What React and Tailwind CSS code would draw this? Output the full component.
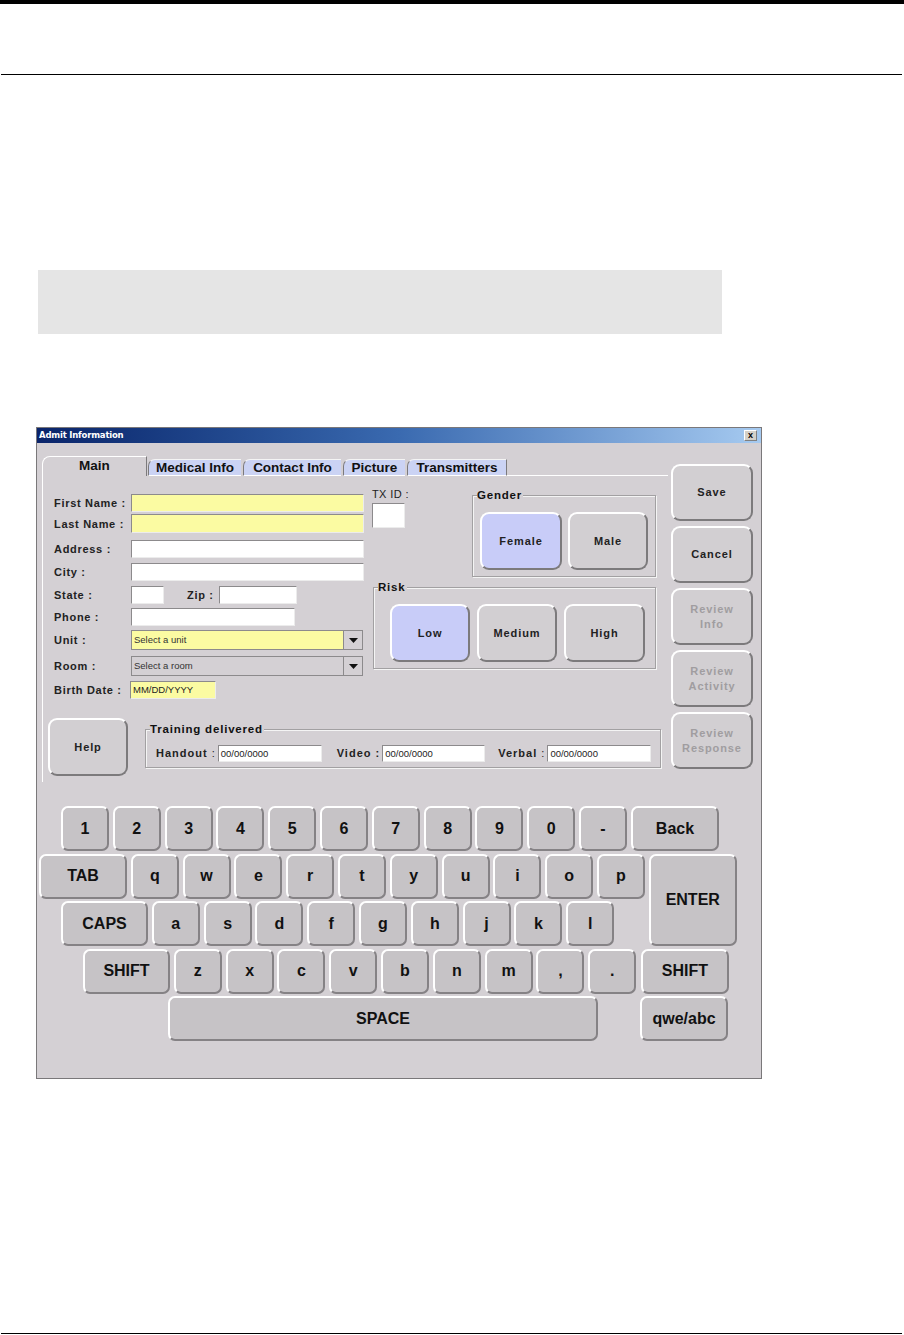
import React from 'react';

const keyBase =
  'flex items-center justify-center h-[45px] rounded-[7px] bg-[#c6c3c6] border-2 border-t-white border-l-white border-r-[#858285] border-b-[#858285] text-[16px] font-bold text-[#111] shrink-0';

const Key = ({ label, className = 'w-[48px]' }) => (
  <div className={`${keyBase} ${className}`}>{label}</div>
);

// big rounded touch button used in the dialog
const PadButton = ({ children, active, disabled, className = '' }) => (
  <div
    className={`flex items-center justify-center text-center shrink-0 rounded-[9px] border-2 border-t-white border-l-white border-r-[#7c7a7c] border-b-[#7c7a7c] text-[11px] font-bold tracking-[0.9px] leading-[15px] ${
      active ? 'bg-[#c8ccf8]' : 'bg-[#d2cfd2]'
    } ${disabled ? 'text-[#a09da0]' : 'text-[#222]'} ${className}`}
  >
    {children}
  </div>
);

const Group = ({ title, className = '', children }) => (
  <div className={`relative border border-[#a2a0a2] shadow-[inset_1px_1px_0_#f4f4f4,1px_1px_0_#f4f4f4] ${className}`}>
    <span className="absolute -top-[7px] left-[4px] bg-[#d4d0d4] pr-[1px] text-[11.5px] font-bold tracking-[0.8px] leading-[13px] text-[#111] whitespace-nowrap">
      {title}
    </span>
    {children}
  </div>
);

const Field = ({ className = '', value, yellow, h = 'h-[18px]' }) => (
  <div
    className={`${h} shrink-0 border border-[#8c8a8c] border-b-[#ececec] border-r-[#ececec] ${
      yellow ? 'bg-[#fbfba2]' : 'bg-white'
    } text-[9.5px] leading-[16px] pl-[2px] text-[#222] tracking-normal font-normal ${className}`}
  >
    {value}
  </div>
);

const Select = ({ value, yellow }) => (
  <div
    className={`flex h-[20px] w-[232px] border border-[#8c8a8c] ${yellow ? 'bg-[#fbfba2]' : 'bg-[#d4d0d4]'}`}
  >
    <div className="flex-1 pl-[2px] text-[9.5px] leading-[18px] text-[#333]">{value}</div>
    <div className="flex w-[19px] items-center justify-center border-l border-[#8c8a8c] bg-[#d4d0d4]">
      <svg width="9" height="5" viewBox="0 0 9 5">
        <path d="M0 0h9L4.5 5z" fill="#111" />
      </svg>
    </div>
  </div>
);

const Row = ({ label, mt, children }) => (
  <div className={`flex items-center ${mt}`}>
    <div className="w-[77px] shrink-0 whitespace-nowrap text-[11px] font-bold tracking-[0.7px] text-[#222] leading-[12px]">{label}</div>
    {children}
  </div>
);

const Tab = ({ label, className }) => (
  <div
    className={`flex h-[17px] items-center justify-center rounded-tl-[7px] border-l border-t border-l-[#7c7a7c] border-t-[#f4f4f4] border-b border-b-white bg-[#cbd3f4] text-[13.5px] font-bold leading-[15px] text-[#111] ${className}`}
  >
    {label}
  </div>
);

const letters1 = ['1', '2', '3', '4', '5', '6', '7', '8', '9', '0', '-'];
const letters2 = ['q', 'w', 'e', 'r', 't', 'y', 'u', 'i', 'o', 'p'];
const letters3 = ['a', 's', 'd', 'f', 'g', 'h', 'j', 'k', 'l'];
const letters4 = ['z', 'x', 'c', 'v', 'b', 'n', 'm', ',', '.'];

export default function App() {
  return (
    <div className="w-[904px] h-[1335px] bg-white font-['Liberation_Sans',Arial,sans-serif] overflow-hidden">
      <div className="h-[4px] bg-black" />
      <div className="h-[70px]" />
      <div className="ml-[1px] mr-[2px] h-[1px] bg-black" />
      <div className="h-[195px]" />
      <div className="ml-[38px] h-[64px] w-[684px] bg-[#e5e5e5]" />
      <div className="h-[93px]" />

      {/* Admit Information dialog */}
      <div className="ml-[36px] flex h-[652px] w-[726px] flex-col border border-[#7a787a] bg-[#d4d0d4]">
        <div className="flex h-[15px] items-center justify-between bg-gradient-to-r from-[#0a246a] via-[#3a6ab0] to-[#a6caf0] pl-[2px] pr-[4px]">
          <span className="font-['DejaVu_Sans',sans-serif] text-[8.5px] font-bold tracking-[-0.2px] text-white">Admit Information</span>
          <div className="flex h-[11px] w-[13px] items-center justify-center border border-[#808080] border-t-white border-l-white bg-[#d4d0c8] text-[9px] font-bold leading-none text-black">
            x
          </div>
        </div>

        <div className="flex flex-1 flex-col pt-[13px]">
          {/* upper area */}
          <div className="flex h-[350px] pl-[5px]">
            <div className="flex w-[626px] flex-col">
              {/* tabs */}
              <div className="flex h-[20px] items-end">
                <div className="flex h-[20px] w-[105px] items-center justify-center rounded-tl-[8px] border-l border-t border-r border-l-white border-t-white border-r-[#7c7a7c] bg-[#d4d0d4] text-[13.5px] font-bold text-[#111]">
                  Main
                </div>
                <Tab label="Medical Info" className="ml-[1px] w-[93px]" />
                <Tab label="Contact Info" className="ml-[2px] w-[98px]" />
                <Tab label="Picture" className="ml-[2px] w-[62px]" />
                <Tab label="Transmitters" className="ml-[2px] w-[100px] border-r border-r-[#7c7a7c]" />
                <div className="flex-1 border-b border-white" />
              </div>

              {/* panel */}
              <div className="flex flex-col border-l border-white pt-[12px] pb-[6px]">
                <div className="flex">
                  {/* column A */}
                  <div className="ml-[11px] mt-[6px] flex w-[310px] flex-col">
                    <Row label="First Name :" mt="">
                      <Field yellow className="w-[233px]" />
                    </Row>
                    <Row label="Last Name :" mt="mt-[2px]">
                      <Field yellow h="h-[19px]" className="w-[233px]" />
                    </Row>
                    <Row label="Address :" mt="mt-[7px]">
                      <Field className="w-[233px]" />
                    </Row>
                    <Row label="City :" mt="mt-[5px]">
                      <Field className="w-[233px]" />
                    </Row>
                    <Row label="State :" mt="mt-[5px]">
                      <Field className="w-[33px]" />
                      <div className="ml-[23px] w-[32px] text-[11px] font-bold tracking-[0.7px] text-[#222]">Zip :</div>
                      <Field className="w-[78px]" />
                    </Row>
                    <Row label="Phone :" mt="mt-[4px]">
                      <Field className="w-[164px]" />
                    </Row>
                    <Row label="Unit :" mt="mt-[4px]">
                      <Select yellow value="Select a unit" />
                    </Row>
                    <Row label="Room :" mt="mt-[6px]">
                      <Select value="Select a room" />
                    </Row>
                    <Row label="Birth Date :" mt="mt-[5px]">
                      <Field yellow value="MM/DD/YYYY" className="-ml-[1px] w-[86px]" />
                    </Row>
                  </div>

                  {/* column B */}
                  <div className="ml-[8px] flex w-[285px] flex-col">
                    <div className="flex">
                      <div className="flex w-[34px] flex-col">
                        <div className="h-[12px] whitespace-nowrap text-[11px] leading-[12px] text-[#222] tracking-[0.4px]">TX ID :</div>
                        <Field h="h-[25px]" className="mt-[3px] w-[33px]" />
                      </div>
                      <Group title="Gender" className="ml-[66px] mt-[7px] h-[82px] w-[184px]">
                        <div className="flex pl-[7px] pt-[16px]">
                          <PadButton active className="h-[58px] w-[82px]">Female</PadButton>
                          <PadButton className="ml-[6px] h-[58px] w-[80px]">Male</PadButton>
                        </div>
                      </Group>
                    </div>
                    <Group title="Risk" className="ml-[1px] mt-[10px] h-[82px] w-[283px]">
                      <div className="flex pl-[16px] pt-[16px]">
                        <PadButton active className="h-[58px] w-[80px]">Low</PadButton>
                        <PadButton className="ml-[7px] h-[58px] w-[80px]">Medium</PadButton>
                        <PadButton className="ml-[7px] h-[58px] w-[81px]">High</PadButton>
                      </div>
                    </Group>
                  </div>
                </div>

                {/* help + training */}
                <div className="mt-[19px] flex">
                  <PadButton className="ml-[5px] h-[58px] w-[80px]">Help</PadButton>
                  <Group title="Training delivered" className="ml-[17px] mt-[11px] h-[39px] w-[516px]">
                    <div className="flex items-center pl-[10px] pt-[15px] text-[11px] tracking-[1px] text-[#222]">
                      <span className="font-bold">Handout</span>
                      <span>&nbsp;:</span>
                      <Field value="00/00/0000" h="h-[17px]" className="ml-[2px] w-[104px] leading-[15px]" />
                      <span className="ml-[15px] font-bold">Video :</span>
                      <Field value="00/00/0000" h="h-[17px]" className="ml-[2px] w-[103px] leading-[15px]" />
                      <span className="ml-[13px] font-bold">Verbal</span>
                      <span>&nbsp;:</span>
                      <Field value="00/00/0000" h="h-[17px]" className="ml-[2px] w-[104px] leading-[15px]" />
                    </div>
                  </Group>
                </div>
              </div>
            </div>

            {/* right command column */}
            <div className="ml-[3px] mt-[8px] flex flex-col gap-[5px]">
              <PadButton className="h-[57px] w-[82px]">Save</PadButton>
              <PadButton className="h-[57px] w-[82px]">Cancel</PadButton>
              <PadButton disabled className="h-[57px] w-[82px]">Review<br />Info</PadButton>
              <PadButton disabled className="h-[57px] w-[82px]">Review<br />Activity</PadButton>
              <PadButton disabled className="h-[57px] w-[82px]">Review<br />Response</PadButton>
            </div>
          </div>

          {/* on-screen keyboard */}
          <div className="flex flex-col gap-[2.5px]">
            <div className="ml-[24px] flex gap-[3.8px]">
              {letters1.map((k) => (
                <Key key={k} label={k} />
              ))}
              <Key label="Back" className="ml-[0.2px] w-[88px]" />
            </div>
            <div className="ml-[2px] flex">
              <div className="flex flex-col gap-[2.5px]">
                <div className="flex gap-[3.8px]">
                  <Key label="TAB" className="w-[88px]" />
                  {letters2.map((k) => (
                    <Key key={k} label={k} />
                  ))}
                </div>
                <div className="ml-[22px] flex gap-[3.8px]">
                  <Key label="CAPS" className="w-[87px]" />
                  {letters3.map((k) => (
                    <Key key={k} label={k} />
                  ))}
                </div>
              </div>
              <Key label="ENTER" className="ml-[3.8px] h-[92.5px] w-[88px]" />
            </div>
            <div className="ml-[46px] flex gap-[3.8px]">
              <Key label="SHIFT" className="w-[87px]" />
              {letters4.map((k) => (
                <Key key={k} label={k} />
              ))}
              <Key label="SHIFT" className="ml-[1px] w-[88px]" />
            </div>
            <div className="ml-[131px] flex">
              <Key label="SPACE" className="w-[430px]" />
              <Key label="qwe/abc" className="ml-[42px] w-[88px]" />
            </div>
          </div>
        </div>
      </div>

      <div className="h-[254px]" />
      <div className="ml-[1px] mr-[2px] h-[1px] bg-black" />
    </div>
  );
}
